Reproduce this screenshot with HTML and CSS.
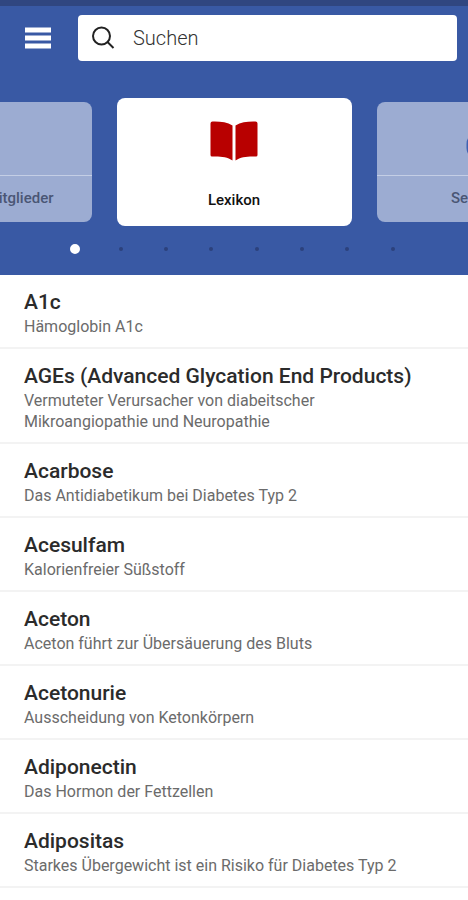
FILE: index.html
```html
<!DOCTYPE html>
<html lang="de">
<head>
<meta charset="utf-8">
<meta name="viewport" content="width=device-width, initial-scale=1">
<title>Lexikon</title>
<link rel="stylesheet" href="styles.css">
</head>
<body>
<header class="header">
  <div class="toolbar">
    <button class="menu" type="button" aria-label="Menü">
      <svg width="26" height="22" viewBox="0 0 26 22" fill="#fff"><path d="M0 0.5h26v5H0zM0 8.500h26v5H0zM0 16.500h26v5H0z"/></svg>
    </button>
    <label class="search">
      <svg width="24" height="24" viewBox="0 0 24 24" fill="none" stroke="#222" stroke-width="2"><circle cx="9.500" cy="10" r="8.500"/><path d="M15.500 16l6 6"/></svg>
      <input type="search" placeholder="Suchen" aria-label="Suchen">
    </label>
  </div>
  <nav class="carousel">
    <a class="card" href="#mitglieder">
      <span class="card-icon"></span>
      <span class="card-label">Angebote für Mitglieder</span>
    </a>
    <a class="card active" href="#lexikon">
      <span class="card-icon">
        <svg width="48" height="40" viewBox="0 0 48 40" fill="#b80000"><path d="M2.500 .5C10 .3 17 1 22.500 4.500V39.500C17 35.500 10 35.300 2 35.500Q.5 35.500 .5 34V2.500Q.5 .5 2.500 .5zM45.500 .5C38 .3 31 1 25.500 4.500V39.500C31 35.500 38 35.300 46 35.500Q47.500 35.500 47.500 34V2.500Q47.500 .5 45.500 .5z"/></svg>
      </span>
      <span class="card-label">Lexikon</span>
    </a>
    <a class="card" href="#service">
      <span class="card-icon">
        <svg width="56" height="40" viewBox="0 0 56 40" fill="none" stroke="#3f61b0" stroke-width="5" stroke-linejoin="round"><path d="M3 22V18Q3 12 9 12H47Q53 12 53 18V22Q53 28 47 28H9Q3 28 3 22z"/></svg>
      </span>
      <span class="card-label">Servicestelle</span>
    </a>
  </nav>
  <div class="dots">
    <span class="dot current"></span><span class="dot"></span><span class="dot"></span><span class="dot"></span><span class="dot"></span><span class="dot"></span><span class="dot"></span><span class="dot"></span>
  </div>
</header>
<main>
  <ul class="list">
    <li><h2>A1c</h2><p>Hämoglobin A1c</p></li>
    <li><h2>AGEs (Advanced Glycation End Products)</h2><p>Vermuteter Verursacher von diabeitscher<br>Mikroangiopathie und Neuropathie</p></li>
    <li><h2>Acarbose</h2><p>Das Antidiabetikum bei Diabetes Typ 2</p></li>
    <li><h2>Acesulfam</h2><p>Kalorienfreier Süßstoff</p></li>
    <li><h2>Aceton</h2><p>Aceton führt zur Übersäuerung des Bluts</p></li>
    <li><h2>Acetonurie</h2><p>Ausscheidung von Ketonkörpern</p></li>
    <li><h2>Adiponectin</h2><p>Das Hormon der Fettzellen</p></li>
    <li><h2>Adipositas</h2><p>Starkes Übergewicht ist ein Risiko für Diabetes Typ 2</p></li>
  </ul>
</main>
</body>
</html>
```
FILE: styles.css
```css
* {
  box-sizing: border-box;
}

body {
  margin: 0;
  background: #fff;
  font-family: Roboto, "Liberation Sans", sans-serif;
}

.header {
  overflow: hidden;
  padding-bottom: 21px;
  border-top: 6px solid #304680;
  background: #3959a4;
}

.toolbar {
  display: flex;
  align-items: center;
  gap: 27px;
  padding: 9px 11px 0 25px;
}

.menu {
  display: flex;
  padding: 0;
  border: 0;
  background: none;
}

.search {
  display: flex;
  flex: 1;
  align-items: center;
  gap: 17px;
  height: 46px;
  padding: 0 14px;
  border-radius: 4px;
  background: #fff;
}

.search input {
  flex: 1;
  min-width: 0;
  padding: 0;
  border: 0;
  outline: 0;
  background: none;
  color: #333;
  font: 300 20px/24px Roboto, "Liberation Sans", sans-serif;
}

.search input::placeholder {
  color: #333;
  opacity: 1;
}

.carousel {
  display: flex;
  align-items: center;
  justify-content: center;
  gap: 25px;
  margin-top: 37px;
}

.card {
  display: flex;
  flex: none;
  flex-direction: column;
  width: 235px;
  height: 120px;
  border-radius: 8px;
  background: #9cacd2;
  color: #4a5675;
  text-decoration: none;
}

.card-icon {
  display: flex;
  align-items: center;
  justify-content: center;
  height: 74px;
  padding-top: 14px;
  border-bottom: 1px solid #c4cee5;
}

.card-label {
  padding-top: 12px;
  font-size: 15px;
  font-weight: 500;
  line-height: 20px;
  text-align: center;
}

.card.active {
  height: 128px;
  background: #fff;
  color: #111;
}

.card.active .card-icon {
  height: 80px;
  padding-top: 6px;
  border-color: transparent;
}

.dots {
  display: flex;
  align-items: center;
  justify-content: space-between;
  width: 70%;
  height: 10px;
  margin: 18px auto 0;
}

.dot {
  width: 10px;
  height: 10px;
  border: 3px solid transparent;
  border-radius: 50%;
  background: #2c417c padding-box;
}

.dot.current {
  border-color: #fff;
  background: #fff;
}

.list {
  margin: 0;
  padding: 0;
  list-style: none;
}

.list li {
  padding: 14px 24px 10px;
  border-bottom: 2px solid #f3f3f3;
}

.list h2 {
  margin: 0;
  color: #2b2b2b;
  font-size: 21px;
  font-weight: 500;
  line-height: 26px;
}

.list p {
  margin: 1px 0 0;
  color: #6b6b6b;
  font-size: 16px;
  line-height: 21px;
}
```
